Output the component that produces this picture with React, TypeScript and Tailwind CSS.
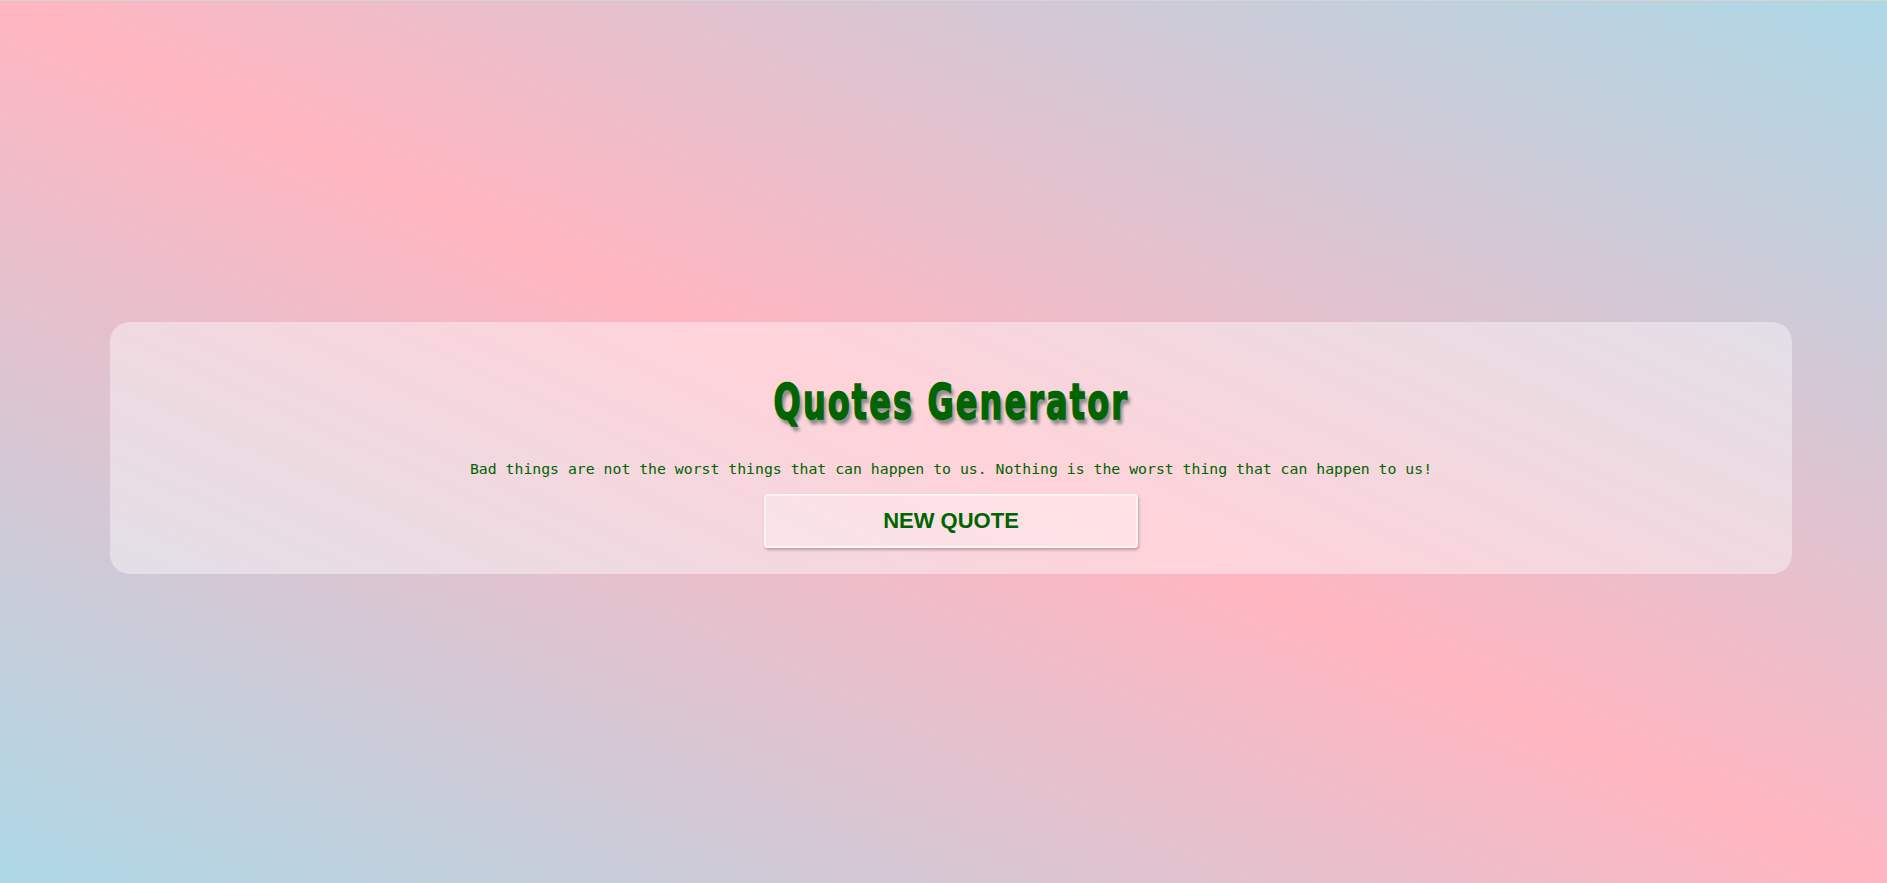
import React from "react";

export default function App() {
  return (
    <div className="min-h-screen w-full border-t border-[#d6d6d6] pt-[11px] flex items-center bg-[linear-gradient(to_top_right,#add8e6,#ffb6c1,#add8e6)]">
      <div className="ml-[110px] w-[1682px] h-[252px] rounded-[20px] bg-white/40 flex flex-col items-center pt-[52px]">
        <h1 className="h-[56px] leading-[56px] text-[50px] font-bold tracking-[3px] text-[#006400] font-['DejaVu_Sans_Condensed','DejaVu_Sans',sans-serif] font-stretch-condensed inline-block scale-x-[0.71] [-webkit-text-stroke:1.5px_#006400] [text-shadow:4px_5px_4px_#8a8a8a]">
          Quotes Generator
        </h1>
        <p className="mt-[29px] h-[20px] leading-[20px] text-[14.8px] text-[#006400] whitespace-nowrap font-['DejaVu_Sans_Mono','Liberation_Mono',monospace]">
          Bad things are not the worst things that can happen to us. Nothing is the worst thing that can happen to us!
        </p>
        <button className="mt-[15px] w-[374px] h-[54px] rounded-[4px] border-2 border-white/60 bg-white/30 shadow-[1px_2px_3px_rgba(0,0,0,0.25)] text-[22px] font-bold text-[#006400] font-['Liberation_Sans',Arial,sans-serif]">
          NEW QUOTE
        </button>
      </div>
    </div>
  );
}
